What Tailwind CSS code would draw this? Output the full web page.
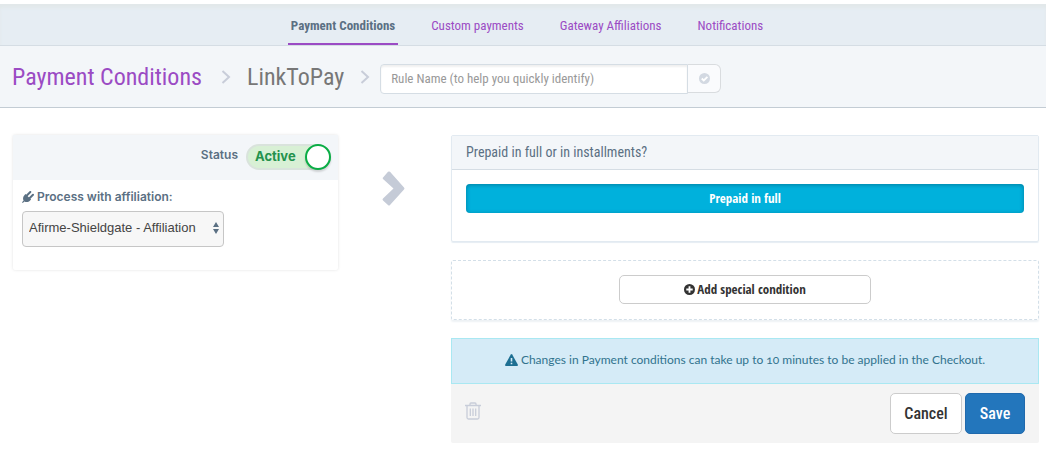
<!DOCTYPE html>
<html lang="en">
<head>
<meta charset="utf-8">
<title>Payment Conditions</title>
<meta name="viewport" content="width=device-width, initial-scale=1">
<script src="https://cdn.jsdelivr.net/npm/@tailwindcss/browser@4"></script>
</head>
<body class="bg-white font-['Roboto_Condensed','Open_Sans_Condensed',sans-serif] text-[#5b7083]">
<nav class="mt-1 flex justify-center gap-[30px] border-b border-[#d5dde4] bg-[#e6edf3] pt-1 pl-2 text-[13px] shadow-[inset_0_4px_3px_#e2e8ea]">
  <a href="#" aria-current="page" class="border-b-2 border-[#9b4bc4] px-[3px] pt-2 pb-[7px] font-bold leading-5">Payment Conditions</a>
  <a href="#" class="px-[3px] pt-2 leading-5 text-[#9b4bc4]">Custom payments</a>
  <a href="#" class="px-[3px] pt-2 leading-5 text-[#9b4bc4]">Gateway Affiliations</a>
  <a href="#" class="px-[3px] pt-2 leading-5 text-[#9b4bc4]">Notifications</a>
</nav>
<header class="flex h-[62px] items-center border-b border-[#c3ccd4] bg-[#f3f6f9] pl-3">
  <a href="#" class="text-[24px] leading-9 text-[#9b4bc4]">Payment Conditions</a>
  <svg class="mr-4 ml-[19px] h-4 w-[10px] text-[#c8cdd9]" viewBox="0 0 10 16" fill="none" stroke="currentColor" stroke-width="2"><path d="M1.500 2 8 8 1.500 14"/></svg>
  <h1 class="text-[24px] leading-9 text-[#777]">LinkToPay</h1>
  <svg class="mr-[10px] ml-4 h-4 w-[10px] text-[#c8cdd9]" viewBox="0 0 10 16" fill="none" stroke="currentColor" stroke-width="2"><path d="M1.500 2 8 8 1.500 14"/></svg>
  <div class="flex items-start pt-1">
    <input type="text" aria-label="Rule name" placeholder="Rule Name (to help you quickly identify)" class="h-[30px] w-[308px] rounded-l border border-[#d5dde4] bg-white px-[10px] text-[13px] shadow-[inset_0_2px_2px_#00000010] placeholder:text-[#999]">
    <button aria-label="Confirm name" class="flex h-[29px] w-[33px] items-center justify-center rounded-r-md border border-l-0 border-[#d9dcdf] bg-[#fafbfd]">
      <svg class="size-[11px]" viewBox="0 0 12 12"><circle cx="6" cy="6" r="6" fill="#d3d9e2"/><path d="m3 6 2.200 2.200L9.200 4.200" fill="none" stroke="#fff" stroke-width="2"/></svg>
    </button>
  </div>
</header>
<main class="grid grid-cols-[325fr_113fr_588fr] items-start pt-[27px] pr-[7px] pl-[13px]">
  <section class="h-[135px] rounded-xs font-['Inter',sans-serif] text-[12px] shadow-[0_0_3px_#0000001f]">
    <div class="flex h-[45px] justify-end gap-2 bg-[#f3f6f9] pr-[7px] pt-2 font-semibold">
      <label for="status" class="pt-1 leading-4">Status</label>
      <label for="status" class="relative mt-px flex h-[26px] w-[85px] items-center rounded-full border-2 border-[#d9e3dc] bg-[#d8f0d5] pl-[7px] text-[13px] font-bold text-[#23924d]">Active
        <input id="status" type="checkbox" role="switch" checked class="absolute -top-[2px] -right-[2px] size-[26px] appearance-none rounded-full border-2 border-[#0aad45] bg-white shadow-[0_2px_2px_#00000026]">
      </label>
    </div>
    <div class="px-[9px] pt-[9px]">
      <label for="aff" class="flex items-center gap-[3px] font-semibold leading-4">
        <svg class="size-3" viewBox="0 0 12 12" fill="currentColor"><path d="M0 11.200 1.600 9.600C.6 7.600 1 5.400 2.600 3.900L3.400 2.900 9.100 8.600 8.100 9.400C6.600 11 4.400 11.400 2.400 10.400L.8 12Z"/><path d="M4.800 4.500 8.300 1M7.500 7.200 11 3.700" stroke="currentColor" stroke-width="2" stroke-linecap="round"/></svg>
        Process with affiliation:</label>
      <div class="relative mt-[6px] w-[202px]">
        <select id="aff" class="h-9 w-full appearance-none rounded border border-[#c6c6c6] bg-[#f7f7f7] px-[6px] pb-[2px] font-['Liberation_Sans',sans-serif] text-[13px] text-[#444]"><option>Afirme-Shieldgate - Affiliation</option></select>
        <svg class="pointer-events-none absolute top-[11px] right-[5px] h-3 w-[6px]" viewBox="0 0 6 12" fill="#5b7083"><path d="M3 0 6 5H0ZM3 12 0 7h6Z"/></svg>
      </div>
    </div>
  </section>
  <svg class="mt-9 ml-11 h-[35px] w-[25px]" viewBox="0 0 25 35" fill="#c5cbd7"><path d="M1.500 6 6 .8Q7 0 8 .8L22 16.500Q23 17.500 22 18.500L8 34Q7 35 6 34L1 29.500Q0 28.500 1 27.500L11.500 17.500 1 8Q0 7 1.500 6Z"/></svg>
  <div>
    <section class="h-[107px] rounded-xs border border-[#e2eaf1] shadow-[0_1px_1px_#e6edf3]">
      <h2 class="h-[34px] border-b border-[#d5dde4] bg-[#f3f6f9] px-[14px] pt-[6px] text-[14px] leading-5">Prepaid in full or in installments?</h2>
      <div class="p-[14px]"><button class="block h-[29px] w-full rounded bg-[#00b1dc] font-['Open_Sans_Condensed',sans-serif] text-[13px] font-bold text-white shadow-[inset_0_1px_4px_#005f7c99]">Prepaid in full</button></div>
    </section>
    <section class="mt-[18px] flex h-[60px] items-center justify-center rounded-xs border border-dashed border-[#d3dfe8] pb-px shadow-[0_2px_2px_#eef2f5]">
      <button class="flex h-[29px] w-[252px] items-center justify-center gap-[2px] rounded-[5px] border border-[#ccc] font-['Open_Sans_Condensed',sans-serif] text-[13px] font-bold text-[#333]">
        <svg class="size-[11px]" viewBox="0 0 12 12"><circle cx="6" cy="6" r="6" fill="#333"/><path d="M6 2.500v7M2.500 6h7" stroke="#fff" stroke-width="2"/></svg>
        Add special condition</button>
    </section>
    <p class="mt-[18px] flex h-[46px] items-center justify-center gap-[3px] border border-[#a9e8f2] bg-[#d5ebf7] pb-[2px] font-['Lato',sans-serif] text-[12px] text-[#31738e]">
      <svg class="h-3 w-[13px]" viewBox="0 0 13 12"><path d="M5.800.5Q6.500-.4 7.200.5L12.900 10.800Q13.200 12 12 12H1Q-.2 12 .1 10.800Z" fill="#1d6f92"/><path d="M6.500 4v3.500M6.500 8.700v1.600" stroke="#d5ebf7" stroke-width="1.600"/></svg>
      <span class="[font-variant-numeric:oldstyle-nums]">Changes in Payment conditions can take up to 10 minutes to be applied in the Checkout.</span>
    </p>
    <footer class="flex h-[59px] items-center justify-between rounded-b-xs bg-[#f4f4f4] px-[14px]">
      <button aria-label="Delete" class="pb-[6px]"><svg class="h-[18px] w-4" viewBox="0 0 16 18" fill="none" stroke="#c8cdd9" stroke-width="1.300"><path d="M0 3.500h16M5 3.500V2Q5 1 6 1h4q1 0 1 1v1.500M2 3.500V15.500Q2 17 3.500 17h9q1.500 0 1.500-1.500V3.500M5.300 6.500v7.500M8 6.500v7.500M10.700 6.500v7.500"/></svg></button>
      <div class="flex gap-[3px] text-[16px] font-medium">
        <button class="h-[41px] w-[72px] rounded-[5px] border border-[#ccc] bg-white text-[#333]">Cancel</button>
        <button class="h-[41px] w-[60px] rounded-[5px] border border-[#2069ac] bg-[#2376bc] text-white">Save</button>
      </div>
    </footer>
  </div>
</main>
</body>
</html>
